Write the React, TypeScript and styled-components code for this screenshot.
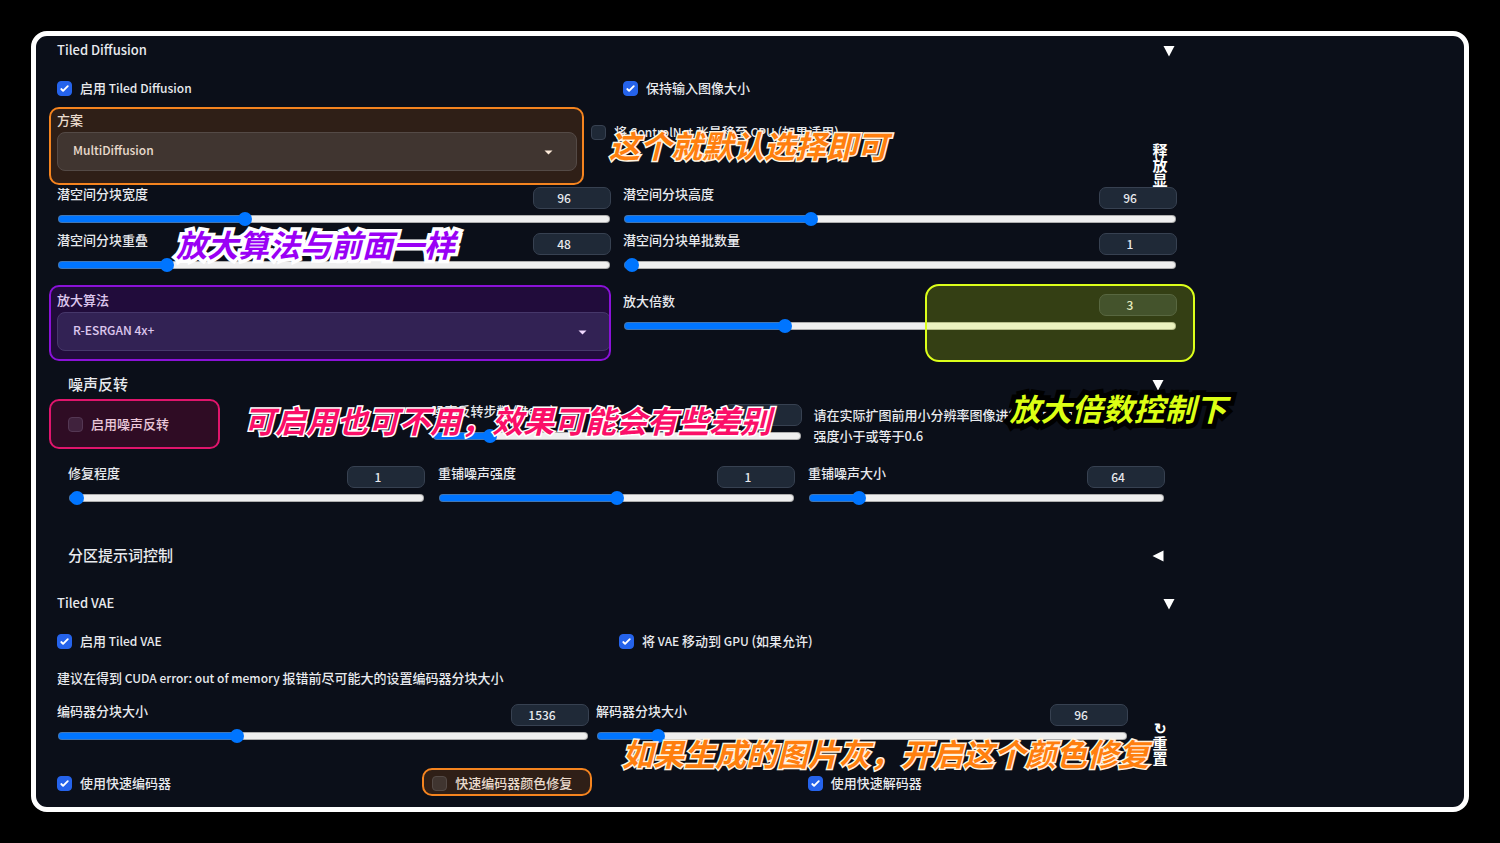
import React, { useId, useState } from "react";
import styled, { createGlobalStyle } from "styled-components";

const GlobalStyle = createGlobalStyle`
  *, *::before, *::after { box-sizing: border-box; }
  body {
    margin: 0;
    background: #000;
    color: #e8eaee;
    font: 500 13px/20px "Noto Sans CJK SC", "Noto Sans", sans-serif;
  }
  button, input, select { font: inherit; color: inherit; }
`;

const tones = {
  orange: { line: "#f5841f", fill: "rgba(255, 128, 13, 0.15)", ink: "#ff7f0e", edge: "#fff4e0", stroke: 3, radius: 10 },
  purple: { line: "#8a12d8", fill: "rgba(160, 0, 255, 0.15)", ink: "#9a00f5", edge: "#ffffff", stroke: 7, radius: 10 },
  pink: { line: "#e0156c", fill: "rgba(255, 0, 102, 0.15)", ink: "#fb0f68", edge: "#ffffff", stroke: 3, radius: 10 },
  lime: { line: "#dcff1a", fill: "rgba(221, 255, 0, 0.2)", ink: "#dcff14", edge: "#000000", stroke: 10, radius: 14 },
};
type Tone = keyof typeof tones;

const Page = styled.main`
  padding: 31px;
`;

const Panel = styled.div`
  border: 5px solid #fff;
  border-radius: 16px;
  background: #0b0f19;
  padding: 5px 287px 13px 21px;
`;

const Section = styled.section<{ $top?: number }>`
  margin-top: ${(p) => p.$top ?? 0}px;
`;

const Inner = styled.div`
  padding: 0 12px 0 11px;
`;

const Row = styled.div<{ $cols: string; $gap: number; $top: number }>`
  display: grid;
  grid-template-columns: ${(p) => p.$cols};
  column-gap: ${(p) => p.$gap}px;
  margin-top: ${(p) => p.$top}px;
`;

const Cell = styled.div<{ $pad?: number; $middle?: boolean }>`
  position: relative;
  min-width: 0;
  padding-top: ${(p) => p.$pad ?? 0}px;
  display: flex;
  flex-direction: column;
  align-items: stretch;
  justify-content: ${(p) => (p.$middle ? "center" : "flex-start")};
`;

const HeadButton = styled.button<{ $right: number }>`
  display: flex;
  width: 100%;
  height: 20px;
  align-items: center;
  justify-content: space-between;
  padding: 0 ${(p) => p.$right}px 2px 0;
  border: 0;
  background: none;
  font-size: 15px;
  line-height: 18px;
  white-space: nowrap;
  text-align: left;
  cursor: pointer;

  svg {
    margin-top: 2px;
  }
`;

const LatinTitle = styled.span`
  font-size: 13px;
`;

const Latin = styled.span`
  font-size: 12px;
`;

const CheckLabel = styled.label`
  position: relative;
  display: flex;
  width: fit-content;
  height: 20px;
  align-items: flex-start;
  gap: 8px;
  line-height: 18px;
  white-space: nowrap;
`;

const CheckBox = styled.span`
  position: relative;
  display: block;
  width: 15px;
  height: 15px;
  margin-top: 2px;
  flex: none;

  input {
    appearance: none;
    display: block;
    width: 15px;
    height: 15px;
    margin: 0;
    border: 1px solid #374151;
    border-radius: 4px;
    background: #1f2937;
  }
  input:checked {
    border-color: #2563eb;
    background: #2563eb;
  }
  svg {
    position: absolute;
    inset: 0;
    pointer-events: none;
  }
`;

const FieldLabel = styled.label`
  display: block;
  height: 20px;
  margin-bottom: 1px;
  line-height: 18px;
  white-space: nowrap;
`;

const SelectWrap = styled.div`
  position: relative;

  select {
    appearance: none;
    display: block;
    width: 100%;
    height: 39px;
    padding: 0 44px 3px 15px;
    border: 1px solid #374151;
    border-radius: 8px;
    background: #1f2937;
    font-size: 12px;
  }
  svg {
    position: absolute;
    right: 24px;
    top: 18px;
    pointer-events: none;
  }
`;

const SliderHead = styled.div`
  display: flex;
  justify-content: space-between;
  height: 22px;
  margin-bottom: 2px;

  label {
    line-height: 14px;
    white-space: nowrap;
  }
`;

const NumberBox = styled.input`
  position: relative;
  z-index: 1;
  appearance: textfield;
  width: 78px;
  height: 22px;
  margin: 0;
  padding: 0 16px 2px 0;
  border: 1px solid #374151;
  border-radius: 7px;
  background: #1f2937;
  font-size: 12px;
  text-align: center;
  &::-webkit-inner-spin-button { appearance: none; }
`;

const Range = styled.input`
  appearance: none;
  display: block;
  width: calc(100% - 2px);
  height: 16px;
  margin: 0 1px;
  background: none;

  &::-webkit-slider-runnable-track {
    height: 8px;
    border: 1px solid rgba(120, 120, 120, 0.55);
    border-radius: 4px;
    background: linear-gradient(#0075ff, #0075ff) 0 / calc(7px + (100% - 14px) * var(--fill)) 100% no-repeat #efefef;
    background-origin: border-box;
  }
  &::-webkit-slider-thumb {
    appearance: none;
    width: 14px;
    height: 14px;
    margin-top: -4px;
    border-radius: 50%;
    background: #0075ff;
  }
`;

const Text = styled.p<{ $top?: number; $line?: number }>`
  margin: ${(p) => p.$top ?? 0}px 0 0;
  line-height: ${(p) => p.$line ?? 20}px;
  white-space: nowrap;
`;

const SideButton = styled.button<{ $pad: number }>`
  display: flex;
  justify-content: center;
  align-items: flex-start;
  height: 60px;
  margin-bottom: -20px;
  padding: ${(p) => p.$pad}px 0 0 8px;
  border: 0;
  background: none;
  color: #fff;
  font-size: 15px;
  font-weight: 700;
  line-height: 15px;

  span {
    width: 16px;
    word-break: break-all;
  }
`;

const Mark = styled.span<{ $tone: Tone; $inset: string; $width?: number }>`
  position: absolute;
  z-index: 2;
  inset: ${(p) => p.$inset};
  ${(p) => p.$width && `width: ${p.$width}px;`}
  border: 2px solid ${(p) => tones[p.$tone].line};
  border-radius: ${(p) => tones[p.$tone].radius}px;
  background: ${(p) => tones[p.$tone].fill};
  pointer-events: none;
`;

const Note = styled.strong<{ $tone: Tone; $x: number; $y: number }>`
  position: absolute;
  z-index: 3;
  left: ${(p) => p.$x}px;
  top: ${(p) => p.$y}px;
  color: ${(p) => tones[p.$tone].ink};
  -webkit-text-stroke: ${(p) => `${tones[p.$tone].stroke}px ${tones[p.$tone].edge}`};
  paint-order: stroke fill;
  stroke-linejoin: round;
  font-size: 31px;
  font-style: italic;
  font-weight: 700;
  line-height: 40px;
  white-space: nowrap;
  pointer-events: none;
`;

function Triangle({ open }: { open: boolean }) {
  return (
    <svg width="12" height="12" viewBox="0 0 12 12" fill="#fff" aria-hidden="true">
      <path d={open ? "M0.5 1h11L6 11.5z" : "M11.5 0.5v11L0.5 6z"} />
    </svg>
  );
}

type CheckProps = { label: React.ReactNode; on?: boolean; children?: React.ReactNode };

function Check({ label, on = false, children }: CheckProps) {
  const [checked, setChecked] = useState(on);
  return (
    <CheckLabel>
      <CheckBox>
        <input type="checkbox" checked={checked} onChange={(e) => setChecked(e.target.checked)} />
        {checked && (
          <svg width="15" height="15" viewBox="0 0 16 16" fill="#fff" aria-hidden="true">
            <path d="M12.2 4.8a1 1 0 0 1 0 1.4l-5 5a1 1 0 0 1-1.4 0l-2-2a1 1 0 0 1 1.4-1.4L6.5 9.1l4.3-4.3a1 1 0 0 1 1.4 0z" />
          </svg>
        )}
      </CheckBox>
      <span>{label}</span>
      {children}
    </CheckLabel>
  );
}

type SliderProps = { label: string; value: number; min?: number; max: number };

function Slider({ label, value, min = 0, max }: SliderProps) {
  const id = useId();
  const [current, setCurrent] = useState(value);
  return (
    <div>
      <SliderHead>
        <label htmlFor={id}>{label}</label>
        <NumberBox type="number" aria-label={label} value={current} onChange={(e) => setCurrent(Number(e.target.value))} />
      </SliderHead>
      <Range
        id={id}
        type="range"
        min={min}
        max={max}
        value={current}
        onChange={(e) => setCurrent(Number(e.target.value))}
        style={{ "--fill": (current - min) / (max - min) } as React.CSSProperties}
      />
    </div>
  );
}

function Dropdown({ label, option }: { label: string; option: string }) {
  const id = useId();
  return (
    <>
      <FieldLabel htmlFor={id}>{label}</FieldLabel>
      <SelectWrap>
        <select id={id} defaultValue={option}>
          <option>{option}</option>
        </select>
        <svg width="9" height="5" viewBox="0 0 9 5" fill="#fff" aria-hidden="true">
          <path d="M0.5 0.5h8L4.5 4.5z" />
        </svg>
      </SelectWrap>
    </>
  );
}

const half = "repeat(2, minmax(0, 1fr))";
const third = "repeat(3, minmax(0, 1fr))";

export default function App() {
  return (
    <Page>
      <GlobalStyle />
      <Panel>
        <Section>
          <HeadButton type="button" aria-expanded="true" $right={2}>
            <LatinTitle>Tiled Diffusion</LatinTitle>
            <Triangle open />
          </HeadButton>
          <Row $cols={half} $gap={12} $top={18}>
            <Check label={<>启用<Latin> Tiled Diffusion</Latin></>} on />
            <Check label="保持输入图像大小" on />
          </Row>
          <Row $cols="minmax(0, 52fr) minmax(0, 53fr) 42px" $gap={14} $top={12}>
            <Cell>
              <Dropdown label="方案" option="MultiDiffusion" />
              <Mark $tone="orange" $inset="-4px -7px -14px -8px" />
            </Cell>
            <Cell $pad={12}>
              <Check label={<>将<Latin> ControlNet </Latin>张量移至<Latin> CPU </Latin>(如果适用)</>} />
              <Note $tone="orange" $x={18} $y={14}>这个就默认选择即可</Note>
            </Cell>
            <SideButton type="button" $pad={31}>
              <span>释放显存</span>
            </SideButton>
          </Row>
          <Row $cols={half} $gap={12} $top={16}>
            <Slider label="潜空间分块宽度" value={96} min={16} max={256} />
            <Slider label="潜空间分块高度" value={96} min={16} max={256} />
          </Row>
          <Row $cols={half} $gap={12} $top={6}>
            <Cell>
              <Slider label="潜空间分块重叠" value={48} max={256} />
              <Note $tone="purple" $x={119} $y={-9}>放大算法与前面一样</Note>
            </Cell>
            <Slider label="潜空间分块单批数量" value={1} min={1} max={8} />
          </Row>
          <Row $cols={half} $gap={12} $top={18}>
            <Cell>
              <Dropdown label="放大算法" option="R-ESRGAN 4x+" />
              <Mark $tone="purple" $inset="-6px 0 -10px -8px" />
            </Cell>
            <Cell $pad={3}>
              <Slider label="放大倍数" value={3} min={1} max={8} />
              <Mark $tone="lime" $inset="-7px -18px -11px auto" $width={270} />
            </Cell>
          </Row>

          <Inner>
            <Section $top={24}>
              <HeadButton type="button" aria-expanded="true" $right={1}>
                噪声反转
                <Triangle open />
              </HeadButton>
              <Row $cols="minmax(0, 19fr) minmax(0, 20fr) minmax(0, 19fr)" $gap={12} $top={9}>
                <Cell $middle>
                  <Check label="启用噪声反转" />
                  <Mark $tone="pink" $inset="-5px auto -3px -19px" $width={171} />
                  <Note $tone="pink" $x={176} $y={-4}>可启用也可不用，效果可能会有些差别</Note>
                </Cell>
                <Slider label="噪声反转步数 (steps)" value={10} min={1} max={65} />
                <Cell>
                  <Text $line={21}>
                    请在实际扩图前用小分辨率图像进行测试参数。
                    <br />
                    强度小于或等于0.6
                  </Text>
                  <Note $tone="lime" $x={196} $y={-16}>放大倍数控制下</Note>
                </Cell>
              </Row>
              <Row $cols={third} $gap={13} $top={20}>
                <Slider label="修复程度" value={1} min={1} max={10} />
                <Slider label="重铺噪声强度" value={1} max={2} />
                <Slider label="重铺噪声大小" value={64} max={512} />
              </Row>
            </Section>
            <Section $top={40}>
              <HeadButton type="button" aria-expanded="false" $right={1}>
                分区提示词控制
                <Triangle open={false} />
              </HeadButton>
            </Section>
          </Inner>
        </Section>

        <Section $top={28}>
          <HeadButton type="button" aria-expanded="true" $right={2}>
            <LatinTitle>Tiled VAE</LatinTitle>
            <Triangle open />
          </HeadButton>
          <Row $cols={half} $gap={4} $top={18}>
            <Check label={<>启用<Latin> Tiled VAE</Latin></>} on />
            <Check label={<>将<Latin> VAE </Latin>移动到<Latin> GPU </Latin>(如果允许)</>} on />
          </Row>
          <Text $top={16}>
            建议在得到<Latin> CUDA error: out of memory </Latin>报错前尽可能大的设置编码器分块大小
          </Text>
          <Row $cols="minmax(0, 1fr) minmax(0, 1fr) 42px" $gap={7} $top={16}>
            <Slider label="编码器分块大小" value={1536} min={256} max={4096} />
            <Cell>
              <Slider label="解码器分块大小" value={96} min={48} max={512} />
              <Note $tone="orange" $x={26} $y={29}>如果生成的图片灰，开启这个颜色修复</Note>
            </Cell>
            <SideButton type="button" $pad={16}>
              <span>↻重置</span>
            </SideButton>
          </Row>
          <Row $cols={third} $gap={6} $top={30}>
            <Check label="使用快速编码器" on />
            <Check label="快速编码器颜色修复">
              <Mark $tone="orange" $inset="-6px -20px -2px -10px" />
            </Check>
            <Check label="使用快速解码器" on />
          </Row>
        </Section>
      </Panel>
    </Page>
  );
}
